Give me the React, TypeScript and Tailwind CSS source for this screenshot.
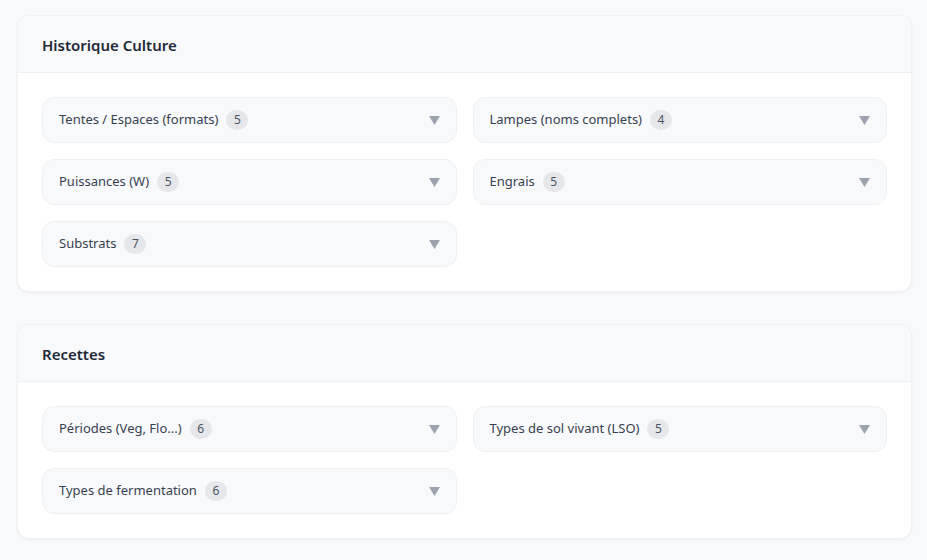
import React from "react";

type Group = { label: string; count: number };

const sections: { title: string; groups: Group[] }[] = [
  {
    title: "Historique Culture",
    groups: [
      { label: "Tentes / Espaces (formats)", count: 5 },
      { label: "Lampes (noms complets)", count: 4 },
      { label: "Puissances (W)", count: 5 },
      { label: "Engrais", count: 5 },
      { label: "Substrats", count: 7 },
    ],
  },
  {
    title: "Recettes",
    groups: [
      { label: "Périodes (Veg, Flo...)", count: 6 },
      { label: "Types de sol vivant (LSO)", count: 5 },
      { label: "Types de fermentation", count: 6 },
    ],
  },
];

function GroupRow({ label, count }: Group) {
  return (
    <button className="flex h-[46px] w-full items-center justify-between rounded-xl border border-[#eef0f3] bg-[#f8f9fb] pl-4 pr-[16px] text-left">
      <span className="flex items-center gap-2">
        <span className="text-[13px] text-[#374151]">{label}</span>
        <span className="flex h-5 min-w-[22px] items-center justify-center rounded-full bg-[#e5e7eb] px-1.5 text-[12px] text-[#4b5563]">
          {count}
        </span>
      </span>
      <svg width="11" height="9" viewBox="0 0 11 9" className="text-[#9ca3af]">
        <path d="M0 0H11L5.5 9Z" fill="currentColor" />
      </svg>
    </button>
  );
}

export default function App() {
  return (
    <div
      className="flex min-h-screen flex-col gap-8 bg-[#f8f9fb] pb-6 pl-[17px] pr-[15px] pt-[15px]"
      style={{ fontFamily: '"Segoe UI", "Noto Sans", "Open Sans", sans-serif' }}
    >
      {sections.map((s) => (
        <section
          key={s.title}
          className="overflow-hidden rounded-xl border border-[#f0f1f4] bg-white shadow-[0_1px_3px_rgba(0,0,0,0.05)]"
        >
          <header className="flex h-[57px] items-center border-b border-[#eef0f3] bg-[#f8f9fb] px-6 pt-[2px]">
            <h2 className="text-[15px] font-semibold text-[#1f2937]">{s.title}</h2>
          </header>
          <div className="grid grid-cols-2 gap-x-4 gap-y-4 px-6 pb-6 pt-6">
            {s.groups.map((g) => (
              <GroupRow key={g.label} {...g} />
            ))}
          </div>
        </section>
      ))}
    </div>
  );
}
